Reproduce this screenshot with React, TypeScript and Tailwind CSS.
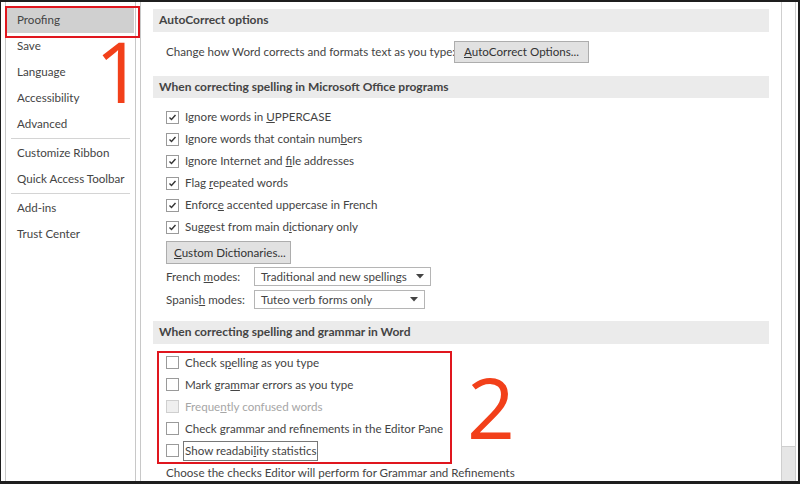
import { FC, ReactNode } from 'react';

const font = { fontFamily: 'Lato, "Open Sans", sans-serif' };

const CheckBox: FC<{ checked?: boolean; disabled?: boolean }> = ({ checked, disabled }) => (
  <span
    className={`flex h-[13px] w-[13px] shrink-0 items-center justify-center border ${
      disabled ? 'border-[#cfcfcf] bg-[#efefef]' : 'border-[#9a9a9a] bg-white'
    }`}
  >
    {checked && (
      <svg width="9" height="9" viewBox="0 0 9 9">
        <path d="M1.5 4.5 L3.5 6.5 L7.5 2" fill="none" stroke="#333" strokeWidth="1.4" />
      </svg>
    )}
  </span>
);

const CheckRow: FC<{ checked?: boolean; disabled?: boolean; focus?: boolean; children: ReactNode }> = ({
  checked,
  disabled,
  focus,
  children,
}) => (
  <div className="flex h-[22px] items-center gap-[6px] whitespace-nowrap">
    <CheckBox checked={checked} disabled={disabled} />
    <span
      className={`${disabled ? 'text-[#a6a6a6]' : 'text-[#444]'} ${
        focus ? 'border border-[#777] px-[1px] leading-[18px] -ml-[2px]' : ''
      }`}
    >
      {children}
    </span>
  </div>
);

const Header: FC<{ children: ReactNode; className?: string }> = ({ children, className }) => (
  <div className={`flex h-[23px] items-center bg-[#ebebeb] pl-[6px] text-[12px] font-bold text-[#444] ${className ?? ''}`}>
    {children}
  </div>
);

const Select: FC<{ value: string; width: string }> = ({ value, width }) => (
  <div className={`flex h-[19px] items-center justify-between border border-[#b5b5b5] bg-white pl-[6px] pr-[6px] ${width}`}>
    <span className="whitespace-nowrap text-[#444]">{value}</span>
    <svg width="8" height="5" viewBox="0 0 8 5">
      <path d="M0 0 L8 0 L4 4.5 Z" fill="#444" />
    </svg>
  </div>
);

const navTop = ['Save', 'Language', 'Accessibility', 'Advanced'];

export default function App() {
  return (
    <div
      className="relative h-[484px] w-[800px] overflow-hidden border-t-2 border-l border-r-2 border-b-[3px] border-[#1e1e1e] bg-white text-[11.6px]"
      style={font}
    >
      <div className="flex h-full">
        {/* sidebar */}
        <div className="ml-[4px] flex w-[131px] shrink-0 flex-col whitespace-nowrap border-x border-[#c8c8c8] pt-[5px] text-[#444]">
          <div className="mx-[1px] flex h-[26px] items-center bg-[#d0d0d0] pl-[10px]">Proofing</div>
          {navTop.map((n) => (
            <div key={n} className="flex h-[26px] items-center pl-[11px]">
              {n}
            </div>
          ))}
          <div className="mx-[5px] my-[1px] h-px bg-[#d4d4d4]" />
          <div className="flex h-[26px] items-center pl-[11px]">Customize Ribbon</div>
          <div className="flex h-[26px] items-center pl-[11px]">Quick Access Toolbar</div>
          <div className="mx-[5px] my-[1px] h-px bg-[#d4d4d4]" />
          <div className="flex h-[26px] items-center pl-[11px]">Add-ins</div>
          <div className="flex h-[26px] items-center pl-[11px]">Trust Center</div>
        </div>

        {/* content */}
        <div className="ml-[4px] flex flex-1 border-l border-[#c8c8c8]">
          <div className="flex w-[628px] shrink-0 flex-col pl-[12px] pt-[7px] text-[#444]">
            <Header>AutoCorrect options</Header>
            <div className="mt-[9px] flex h-[22px] items-center whitespace-nowrap pl-[13px]">
              <span className="w-[288px]">Change how Word corrects and formats text as you type:</span>
              <button className="h-[22px] w-[135px] border border-[#adadad] bg-[#e1e1e1] text-[#333]">
                <u>A</u>utoCorrect Options...
              </button>
            </div>

            <Header className="mt-[13px]">When correcting spelling in Microsoft Office programs</Header>
            <div className="mt-[8px] flex flex-col pl-[13px]">
              <CheckRow checked>
                Ignore words in <u>U</u>PPERCASE
              </CheckRow>
              <CheckRow checked>
                Ignore words that contain num<u>b</u>ers
              </CheckRow>
              <CheckRow checked>
                Ignore Internet and <u>f</u>ile addresses
              </CheckRow>
              <CheckRow checked>
                Flag <u>r</u>epeated words
              </CheckRow>
              <CheckRow checked>
                Enforc<u>e</u> accented uppercase in French
              </CheckRow>
              <CheckRow checked>
                Suggest from main d<u>i</u>ctionary only
              </CheckRow>
              <button className="mt-[3px] h-[23px] w-[125px] whitespace-nowrap border border-[#adadad] bg-[#e1e1e1] pl-[7px] text-left text-[#333]">
                <u>C</u>ustom Dictionaries...
              </button>
              <div className="mt-[3px] flex items-center whitespace-nowrap">
                <span className="w-[88px]">
                  French <u>m</u>odes:
                </span>
                <Select value="Traditional and new spellings" width="w-[177px]" />
              </div>
              <div className="mt-[4px] flex items-center whitespace-nowrap">
                <span className="w-[88px]">
                  Spanis<u>h</u> modes:
                </span>
                <Select value="Tuteo verb forms only" width="w-[171px]" />
              </div>
            </div>

            <Header className="mt-[12px]">When correcting spelling and grammar in Word</Header>
            <div className="ml-[4px] mt-[7px] w-[295px] border-2 border-[#e0161e] pl-[7px]">
              <div className="-mt-[1px]">
                <CheckRow>
                  Check s<u>p</u>elling as you type
                </CheckRow>
                <CheckRow>
                  Mark gra<u>m</u>mar errors as you type
                </CheckRow>
                <CheckRow disabled>
                  Freque<u>n</u>tly confused words
                </CheckRow>
                <CheckRow>Check grammar and refinements in the Editor Pane</CheckRow>
                <CheckRow focus>
                  Show readabi<u>l</u>ity statistics
                </CheckRow>
              </div>
            </div>
            <div className="whitespace-nowrap pl-[13px]">Choose the checks Editor will perform for Grammar and Refinements</div>
          </div>

          <div className="flex-1" />
          {/* scrollbar */}
          <div className="mr-[2px] flex w-[15px] flex-col justify-end border-x border-[#cfcfcf]">
            <div className="h-[35px] border-t border-[#cfcfcf] bg-[#e6e6e6]" />
          </div>
        </div>
      </div>

      {/* annotations */}
      <div className="pointer-events-none absolute left-[4px] top-[4px] h-[32px] w-[135px] border-2 border-[#e0161e]" />
      <div className="pointer-events-none absolute left-[94px] top-[27px] text-[84px] leading-none text-[#f2401a]" style={{ fontFamily: '"Open Sans", sans-serif' }}>1</div>
      <div className="pointer-events-none absolute left-[466px] top-[363px] text-[84px] leading-none text-[#f2401a]" style={{ fontFamily: '"Open Sans", sans-serif' }}>2</div>
    </div>
  );
}
